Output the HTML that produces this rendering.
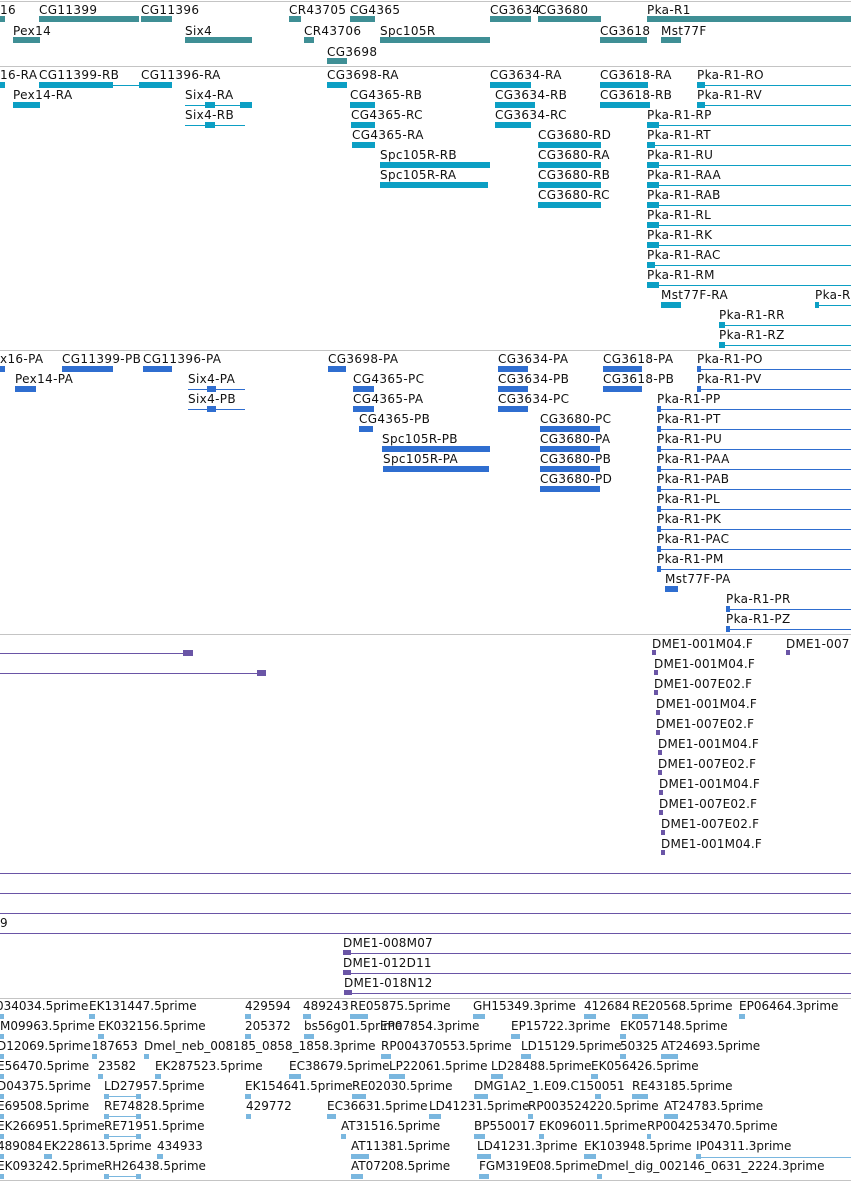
<!DOCTYPE html>
<html><head><meta charset="utf-8">
<style>
html,body{margin:0;padding:0;background:#fff;width:851px;height:1182px;overflow:hidden;position:relative;font-family:"DejaVu Sans","Liberation Sans",sans-serif}
p{position:absolute;margin:0;font-size:12px;line-height:12px;color:#111;white-space:nowrap}
i{position:absolute;display:block;height:6px}
.h{position:absolute;left:0;width:851px;height:1px;background:#c4c4c4}
.a p,.b p,.c p{letter-spacing:0.35px}
.a i{background:#3f8f95}
.b i{background:#0c9fc4}
.c i{background:#2f6ed0}
.d i{background:#6a55a6}
.e i{background:#7ab7df;height:5px}
i.l{height:1px}
.d p{font-size:12px;letter-spacing:0.2px}
</style></head><body>
<div class="h" style="top:1px"></div>
<div class="h" style="top:66px"></div>
<div class="h" style="top:350px"></div>
<div class="h" style="top:634px"></div>
<div class="h" style="top:998px"></div>
<div class="h" style="top:1180px"></div>

<div class="a">
<p style="left:0;top:4px">16</p><p style="left:39px;top:4px">CG11399</p><p style="left:141px;top:4px">CG11396</p><p style="left:289px;top:4px">CR43705</p><p style="left:350px;top:4px">CG4365</p><p style="left:490px;top:4px">CG3634</p><p style="left:538px;top:4px">CG3680</p><p style="left:647px;top:4px">Pka-R1</p>
<i style="left:0;top:16px;width:5px"></i><i style="left:39px;top:16px;width:100px"></i><i style="left:141px;top:16px;width:31px"></i><i style="left:289px;top:16px;width:12px"></i><i style="left:350px;top:16px;width:25px"></i><i style="left:490px;top:16px;width:41px"></i><i style="left:538px;top:16px;width:63px"></i><i style="left:647px;top:16px;width:204px"></i>
<p style="left:13px;top:25px">Pex14</p><p style="left:185px;top:25px">Six4</p><p style="left:304px;top:25px">CR43706</p><p style="left:380px;top:25px">Spc105R</p><p style="left:600px;top:25px">CG3618</p><p style="left:661px;top:25px">Mst77F</p>
<i style="left:13px;top:37px;width:27px"></i><i style="left:185px;top:37px;width:67px"></i><i style="left:304px;top:37px;width:10px"></i><i style="left:380px;top:37px;width:110px"></i><i style="left:600px;top:37px;width:47px"></i><i style="left:661px;top:37px;width:20px"></i>
<p style="left:327px;top:46px">CG3698</p><i style="left:327px;top:58px;width:20px"></i>
</div>

<div class="b">
<p style="left:0;top:69px">16-RA</p><p style="left:39px;top:69px">CG11399-RB</p><p style="left:141px;top:69px">CG11396-RA</p><p style="left:327px;top:69px">CG3698-RA</p><p style="left:490px;top:69px">CG3634-RA</p><p style="left:600px;top:69px">CG3618-RA</p><p style="left:697px;top:69px">Pka-R1-RO</p>
<i style="left:0;top:82px;width:5px"></i><i style="left:39px;top:82px;width:34px"></i><i style="left:73px;top:82px;width:40px"></i><i class="l" style="left:113px;top:85px;width:26px"></i><i style="left:139px;top:82px;width:33px"></i><i style="left:327px;top:82px;width:20px"></i><i style="left:490px;top:82px;width:41px"></i><i style="left:600px;top:82px;width:48px"></i><i style="left:697px;top:82px;width:8px"></i><i class="l" style="left:697px;top:85px;width:154px"></i>
<p style="left:13px;top:89px">Pex14-RA</p><p style="left:185px;top:89px">Six4-RA</p><p style="left:350px;top:89px">CG4365-RB</p><p style="left:495px;top:89px">CG3634-RB</p><p style="left:600px;top:89px">CG3618-RB</p><p style="left:697px;top:89px">Pka-R1-RV</p>
<i style="left:13px;top:102px;width:27px"></i><i class="l" style="left:185px;top:105px;width:67px"></i><i style="left:205px;top:102px;width:10px"></i><i style="left:240px;top:102px;width:12px"></i><i style="left:350px;top:102px;width:25px"></i><i style="left:495px;top:102px;width:40px"></i><i style="left:600px;top:102px;width:50px"></i><i style="left:697px;top:102px;width:8px"></i><i class="l" style="left:697px;top:105px;width:154px"></i>
<p style="left:185px;top:109px">Six4-RB</p><p style="left:351px;top:109px">CG4365-RC</p><p style="left:495px;top:109px">CG3634-RC</p><p style="left:647px;top:109px">Pka-R1-RP</p>
<i class="l" style="left:185px;top:125px;width:60px"></i><i style="left:205px;top:122px;width:10px"></i><i style="left:351px;top:122px;width:24px"></i><i style="left:495px;top:122px;width:36px"></i><i style="left:647px;top:122px;width:12px"></i><i class="l" style="left:647px;top:125px;width:204px"></i>
<p style="left:352px;top:129px">CG4365-RA</p><p style="left:538px;top:129px">CG3680-RD</p><p style="left:647px;top:129px">Pka-R1-RT</p>
<i style="left:352px;top:142px;width:23px"></i><i style="left:538px;top:142px;width:63px"></i><i style="left:647px;top:142px;width:8px"></i><i class="l" style="left:647px;top:145px;width:204px"></i>
<p style="left:380px;top:149px">Spc105R-RB</p><p style="left:538px;top:149px">CG3680-RA</p><p style="left:647px;top:149px">Pka-R1-RU</p>
<i style="left:380px;top:162px;width:110px"></i><i style="left:538px;top:162px;width:63px"></i><i style="left:647px;top:162px;width:12px"></i><i class="l" style="left:647px;top:165px;width:204px"></i>
<p style="left:380px;top:169px">Spc105R-RA</p><p style="left:538px;top:169px">CG3680-RB</p><p style="left:647px;top:169px">Pka-R1-RAA</p>
<i style="left:380px;top:182px;width:108px"></i><i style="left:538px;top:182px;width:63px"></i><i style="left:647px;top:182px;width:12px"></i><i class="l" style="left:647px;top:185px;width:204px"></i>
<p style="left:538px;top:189px">CG3680-RC</p><p style="left:647px;top:189px">Pka-R1-RAB</p>
<i style="left:538px;top:202px;width:63px"></i><i style="left:647px;top:202px;width:12px"></i><i class="l" style="left:647px;top:205px;width:204px"></i>
<p style="left:647px;top:209px">Pka-R1-RL</p><i style="left:647px;top:222px;width:12px"></i><i class="l" style="left:647px;top:225px;width:204px"></i>
<p style="left:647px;top:229px">Pka-R1-RK</p><i style="left:647px;top:242px;width:12px"></i><i class="l" style="left:647px;top:245px;width:204px"></i>
<p style="left:647px;top:249px">Pka-R1-RAC</p><i style="left:647px;top:262px;width:8px"></i><i class="l" style="left:647px;top:265px;width:204px"></i>
<p style="left:647px;top:269px">Pka-R1-RM</p><i style="left:647px;top:282px;width:12px"></i><i class="l" style="left:647px;top:285px;width:204px"></i>
<p style="left:661px;top:289px">Mst77F-RA</p><p style="left:815px;top:289px">Pka-R</p>
<i style="left:661px;top:302px;width:20px"></i><i style="left:815px;top:302px;width:4px"></i><i class="l" style="left:815px;top:305px;width:36px"></i>
<p style="left:719px;top:309px">Pka-R1-RR</p><i style="left:719px;top:322px;width:6px"></i><i class="l" style="left:719px;top:325px;width:132px"></i>
<p style="left:719px;top:329px">Pka-R1-RZ</p><i style="left:719px;top:342px;width:6px"></i><i class="l" style="left:719px;top:345px;width:132px"></i>
</div>

<div class="c">
<p style="left:0;top:353px">x16-PA</p><p style="left:62px;top:353px">CG11399-PB</p><p style="left:143px;top:353px">CG11396-PA</p><p style="left:328px;top:353px">CG3698-PA</p><p style="left:498px;top:353px">CG3634-PA</p><p style="left:603px;top:353px">CG3618-PA</p><p style="left:697px;top:353px">Pka-R1-PO</p>
<i style="left:0;top:366px;width:5px"></i><i style="left:62px;top:366px;width:51px"></i><i style="left:143px;top:366px;width:29px"></i><i style="left:328px;top:366px;width:18px"></i><i style="left:498px;top:366px;width:30px"></i><i style="left:603px;top:366px;width:39px"></i><i style="left:697px;top:366px;width:4px"></i><i class="l" style="left:697px;top:369px;width:154px"></i>
<p style="left:15px;top:373px">Pex14-PA</p><p style="left:188px;top:373px">Six4-PA</p><p style="left:353px;top:373px">CG4365-PC</p><p style="left:498px;top:373px">CG3634-PB</p><p style="left:603px;top:373px">CG3618-PB</p><p style="left:697px;top:373px">Pka-R1-PV</p>
<i style="left:15px;top:386px;width:21px"></i><i class="l" style="left:188px;top:389px;width:57px"></i><i style="left:207px;top:386px;width:9px"></i><i style="left:353px;top:386px;width:21px"></i><i style="left:498px;top:386px;width:30px"></i><i style="left:603px;top:386px;width:39px"></i><i style="left:697px;top:386px;width:4px"></i><i class="l" style="left:697px;top:389px;width:154px"></i>
<p style="left:188px;top:393px">Six4-PB</p><p style="left:353px;top:393px">CG4365-PA</p><p style="left:498px;top:393px">CG3634-PC</p><p style="left:657px;top:393px">Pka-R1-PP</p>
<i class="l" style="left:188px;top:409px;width:57px"></i><i style="left:207px;top:406px;width:9px"></i><i style="left:353px;top:406px;width:21px"></i><i style="left:498px;top:406px;width:30px"></i><i style="left:657px;top:406px;width:4px"></i><i class="l" style="left:657px;top:409px;width:194px"></i>
<p style="left:359px;top:413px">CG4365-PB</p><p style="left:540px;top:413px">CG3680-PC</p><p style="left:657px;top:413px">Pka-R1-PT</p>
<i style="left:359px;top:426px;width:14px"></i><i style="left:540px;top:426px;width:60px"></i><i style="left:657px;top:426px;width:4px"></i><i class="l" style="left:657px;top:429px;width:194px"></i>
<p style="left:382px;top:433px">Spc105R-PB</p><p style="left:540px;top:433px">CG3680-PA</p><p style="left:657px;top:433px">Pka-R1-PU</p>
<i style="left:382px;top:446px;width:108px"></i><i style="left:540px;top:446px;width:60px"></i><i style="left:657px;top:446px;width:4px"></i><i class="l" style="left:657px;top:449px;width:194px"></i>
<p style="left:383px;top:453px">Spc105R-PA</p><p style="left:540px;top:453px">CG3680-PB</p><p style="left:657px;top:453px">Pka-R1-PAA</p>
<i style="left:383px;top:466px;width:106px"></i><i style="left:540px;top:466px;width:60px"></i><i style="left:657px;top:466px;width:4px"></i><i class="l" style="left:657px;top:469px;width:194px"></i>
<p style="left:540px;top:473px">CG3680-PD</p><p style="left:657px;top:473px">Pka-R1-PAB</p>
<i style="left:540px;top:486px;width:60px"></i><i style="left:657px;top:486px;width:4px"></i><i class="l" style="left:657px;top:489px;width:194px"></i>
<p style="left:657px;top:493px">Pka-R1-PL</p><i style="left:657px;top:506px;width:4px"></i><i class="l" style="left:657px;top:509px;width:194px"></i>
<p style="left:657px;top:513px">Pka-R1-PK</p><i style="left:657px;top:526px;width:4px"></i><i class="l" style="left:657px;top:529px;width:194px"></i>
<p style="left:657px;top:533px">Pka-R1-PAC</p><i style="left:657px;top:546px;width:4px"></i><i class="l" style="left:657px;top:549px;width:194px"></i>
<p style="left:657px;top:553px">Pka-R1-PM</p><i style="left:657px;top:566px;width:4px"></i><i class="l" style="left:657px;top:569px;width:194px"></i>
<p style="left:665px;top:573px">Mst77F-PA</p><i style="left:665px;top:586px;width:13px"></i>
<p style="left:726px;top:593px">Pka-R1-PR</p><i style="left:726px;top:606px;width:4px"></i><i class="l" style="left:726px;top:609px;width:125px"></i>
<p style="left:726px;top:613px">Pka-R1-PZ</p><i style="left:726px;top:626px;width:4px"></i><i class="l" style="left:726px;top:629px;width:125px"></i>
</div>

<div class="d">
<i class="l" style="left:0;top:653px;width:190px"></i><i style="left:183px;top:650px;width:10px"></i>
<i class="l" style="left:0;top:673px;width:265px"></i><i style="left:257px;top:670px;width:9px"></i>
<p style="left:652px;top:638px">DME1-001M04.F</p><p style="left:786px;top:638px">DME1-007</p>
<i style="left:652px;top:650px;width:4px;height:5px"></i><i style="left:786px;top:650px;width:4px;height:5px"></i>
<p style="left:654px;top:658px">DME1-001M04.F</p><i style="left:654px;top:670px;width:4px;height:5px"></i>
<p style="left:654px;top:678px">DME1-007E02.F</p><i style="left:654px;top:690px;width:4px;height:5px"></i>
<p style="left:656px;top:698px">DME1-001M04.F</p><i style="left:656px;top:710px;width:4px;height:5px"></i>
<p style="left:656px;top:718px">DME1-007E02.F</p><i style="left:656px;top:730px;width:4px;height:5px"></i>
<p style="left:658px;top:738px">DME1-001M04.F</p><i style="left:658px;top:750px;width:4px;height:5px"></i>
<p style="left:658px;top:758px">DME1-007E02.F</p><i style="left:658px;top:770px;width:4px;height:5px"></i>
<p style="left:659px;top:778px">DME1-001M04.F</p><i style="left:659px;top:790px;width:4px;height:5px"></i>
<p style="left:659px;top:798px">DME1-007E02.F</p><i style="left:659px;top:810px;width:4px;height:5px"></i>
<p style="left:661px;top:818px">DME1-007E02.F</p><i style="left:661px;top:830px;width:4px;height:5px"></i>
<p style="left:661px;top:838px">DME1-001M04.F</p><i style="left:661px;top:850px;width:4px;height:5px"></i>
<i class="l" style="left:0;top:873px;width:851px"></i>
<i class="l" style="left:0;top:893px;width:851px"></i>
<i class="l" style="left:0;top:913px;width:851px"></i>
<p style="left:0;top:917px">9</p>
<i class="l" style="left:0;top:933px;width:851px"></i>
<p style="left:343px;top:937px">DME1-008M07</p><i class="l" style="left:343px;top:953px;width:508px"></i><i style="left:343px;top:950px;width:8px;height:5px"></i>
<p style="left:343px;top:957px">DME1-012D11</p><i class="l" style="left:343px;top:973px;width:508px"></i><i style="left:343px;top:970px;width:8px;height:5px"></i>
<p style="left:344px;top:977px">DME1-018N12</p><i class="l" style="left:344px;top:993px;width:507px"></i><i style="left:344px;top:990px;width:8px;height:5px"></i>
</div>

<div class="e">
<p style="left:-4px;top:1000px">034034.5prime</p><p style="left:89px;top:1000px">EK131447.5prime</p><p style="left:245px;top:1000px">429594</p><p style="left:303px;top:1000px">489243</p><p style="left:350px;top:1000px">RE05875.5prime</p><p style="left:473px;top:1000px">GH15349.3prime</p><p style="left:584px;top:1000px">412684</p><p style="left:632px;top:1000px">RE20568.5prime</p><p style="left:739px;top:1000px">EP06464.3prime</p>
<i style="left:0;top:1014px;width:4px"></i><i style="left:89px;top:1014px;width:6px"></i><i style="left:245px;top:1014px;width:6px"></i><i style="left:303px;top:1014px;width:8px"></i><i style="left:350px;top:1014px;width:18px"></i><i style="left:473px;top:1014px;width:12px"></i><i style="left:584px;top:1014px;width:12px"></i><i style="left:632px;top:1014px;width:16px"></i><i style="left:739px;top:1014px;width:6px"></i>
<p style="left:0;top:1020px">M09963.5prime</p><p style="left:98px;top:1020px">EK032156.5prime</p><p style="left:245px;top:1020px">205372</p><p style="left:304px;top:1020px">bs56g01.5prime</p><p style="left:380px;top:1020px">EP07854.3prime</p><p style="left:511px;top:1020px">EP15722.3prime</p><p style="left:620px;top:1020px">EK057148.5prime</p>
<i style="left:0;top:1034px;width:4px"></i><i style="left:98px;top:1034px;width:6px"></i><i style="left:245px;top:1034px;width:6px"></i><i style="left:304px;top:1034px;width:10px"></i><i style="left:511px;top:1034px;width:9px"></i><i style="left:620px;top:1034px;width:6px"></i>
<p style="left:-3px;top:1040px">D12069.5prime</p><p style="left:92px;top:1040px">187653</p><p style="left:144px;top:1040px">Dmel_neb_008185_0858_1858.3prime</p><p style="left:381px;top:1040px">RP004370553.5prime</p><p style="left:521px;top:1040px">LD15129.5prime</p><p style="left:620px;top:1040px">50325</p><p style="left:661px;top:1040px">AT24693.5prime</p>
<i style="left:0;top:1054px;width:4px"></i><i style="left:92px;top:1054px;width:5px"></i><i style="left:144px;top:1054px;width:5px"></i><i style="left:381px;top:1054px;width:10px"></i><i style="left:521px;top:1054px;width:10px"></i><i style="left:620px;top:1054px;width:6px"></i><i style="left:661px;top:1054px;width:17px"></i>
<p style="left:-3px;top:1060px">E56470.5prime</p><p style="left:98px;top:1060px">23582</p><p style="left:155px;top:1060px">EK287523.5prime</p><p style="left:289px;top:1060px">EC38679.5prime</p><p style="left:389px;top:1060px">LP22061.5prime</p><p style="left:491px;top:1060px">LD28488.5prime</p><p style="left:591px;top:1060px">EK056426.5prime</p>
<i style="left:0;top:1074px;width:4px"></i><i style="left:98px;top:1074px;width:5px"></i><i style="left:155px;top:1074px;width:6px"></i><i style="left:289px;top:1074px;width:12px"></i><i style="left:389px;top:1074px;width:16px"></i><i style="left:491px;top:1074px;width:12px"></i><i style="left:591px;top:1074px;width:7px"></i>
<p style="left:-3px;top:1080px">D04375.5prime</p><p style="left:104px;top:1080px">LD27957.5prime</p><p style="left:245px;top:1080px">EK154641.5prime</p><p style="left:352px;top:1080px">RE02030.5prime</p><p style="left:474px;top:1080px">DMG1A2_1.E09.C150051</p><p style="left:632px;top:1080px">RE43185.5prime</p>
<i style="left:0;top:1094px;width:4px"></i><i class="l" style="left:104px;top:1096px;width:37px"></i><i style="left:104px;top:1094px;width:5px"></i><i style="left:136px;top:1094px;width:5px"></i><i style="left:245px;top:1094px;width:6px"></i><i style="left:352px;top:1094px;width:14px"></i><i style="left:474px;top:1094px;width:14px"></i><i style="left:595px;top:1094px;width:6px"></i><i style="left:632px;top:1094px;width:16px"></i>
<p style="left:-3px;top:1100px">E69508.5prime</p><p style="left:104px;top:1100px">RE74828.5prime</p><p style="left:246px;top:1100px">429772</p><p style="left:327px;top:1100px">EC36631.5prime</p><p style="left:429px;top:1100px">LD41231.5prime</p><p style="left:528px;top:1100px">RP003524220.5prime</p><p style="left:664px;top:1100px">AT24783.5prime</p>
<i style="left:0;top:1114px;width:4px"></i><i class="l" style="left:104px;top:1116px;width:37px"></i><i style="left:104px;top:1114px;width:5px"></i><i style="left:136px;top:1114px;width:5px"></i><i style="left:246px;top:1114px;width:5px"></i><i style="left:327px;top:1114px;width:9px"></i><i style="left:429px;top:1114px;width:12px"></i><i style="left:528px;top:1114px;width:5px"></i><i style="left:664px;top:1114px;width:14px"></i>
<p style="left:-3px;top:1120px">EK266951.5prime</p><p style="left:104px;top:1120px">RE71951.5prime</p><p style="left:341px;top:1120px">AT31516.5prime</p><p style="left:474px;top:1120px">BP550017</p><p style="left:539px;top:1120px">EK096011.5prime</p><p style="left:647px;top:1120px">RP004253470.5prime</p>
<i style="left:0;top:1134px;width:4px"></i><i class="l" style="left:104px;top:1136px;width:37px"></i><i style="left:104px;top:1134px;width:5px"></i><i style="left:136px;top:1134px;width:5px"></i><i style="left:341px;top:1134px;width:5px"></i><i style="left:474px;top:1134px;width:11px"></i><i style="left:539px;top:1134px;width:5px"></i><i style="left:647px;top:1134px;width:4px"></i>
<p style="left:-3px;top:1140px">489084</p><p style="left:44px;top:1140px">EK228613.5prime</p><p style="left:157px;top:1140px">434933</p><p style="left:351px;top:1140px">AT11381.5prime</p><p style="left:477px;top:1140px">LD41231.3prime</p><p style="left:584px;top:1140px">EK103948.5prime</p><p style="left:696px;top:1140px">IP04311.3prime</p>
<i style="left:0;top:1154px;width:4px"></i><i style="left:44px;top:1154px;width:8px"></i><i style="left:157px;top:1154px;width:6px"></i><i style="left:351px;top:1154px;width:18px"></i><i style="left:477px;top:1154px;width:14px"></i><i style="left:584px;top:1154px;width:12px"></i><i style="left:696px;top:1154px;width:5px"></i><i class="l" style="left:696px;top:1157px;width:155px"></i>
<p style="left:-3px;top:1160px">EK093242.5prime</p><p style="left:104px;top:1160px">RH26438.5prime</p><p style="left:351px;top:1160px">AT07208.5prime</p><p style="left:479px;top:1160px">FGM319E08.5prime</p><p style="left:597px;top:1160px">Dmel_dig_002146_0631_2224.3prime</p>
<i style="left:0;top:1174px;width:4px"></i><i class="l" style="left:104px;top:1176px;width:37px"></i><i style="left:104px;top:1174px;width:5px"></i><i style="left:136px;top:1174px;width:5px"></i><i style="left:351px;top:1174px;width:12px"></i><i style="left:479px;top:1174px;width:10px"></i><i style="left:597px;top:1174px;width:5px"></i>
</div>
</body></html>
